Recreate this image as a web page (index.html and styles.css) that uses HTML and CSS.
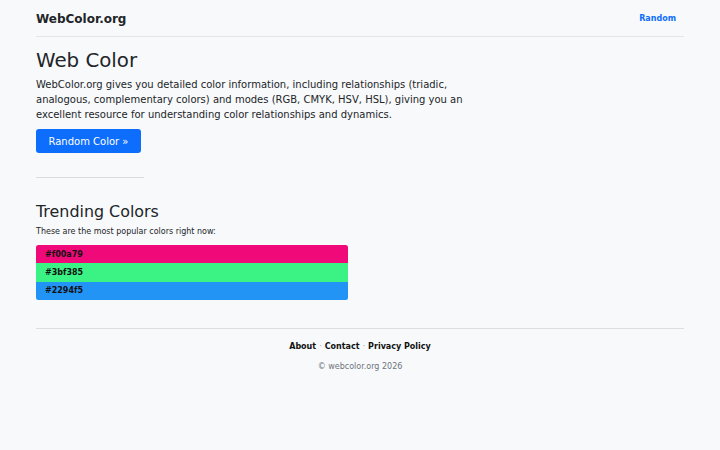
FILE: index.html
```html
<!DOCTYPE html>
<html lang="en">
<head>
<meta charset="utf-8">
<title>WebColor.org</title>
<link rel="stylesheet" href="styles.css">
</head>
<body>
<div class="container">
  <header class="site-header">
    <a class="brand" href="#">WebColor.org</a>
    <nav class="nav">
      <a class="nav-link" href="#">Random</a>
    </nav>
  </header>

  <main>
    <section class="intro">
      <h1 class="title">Web Color</h1>
      <p class="lead">WebColor.org gives you detailed color information, including relationships (triadic, analogous, complementary colors) and modes (RGB, CMYK, HSV, HSL), giving you an excellent resource for understanding color relationships and dynamics.</p>
      <div class="actions">
        <a class="btn" href="#">Random Color »</a>
      </div>
    </section>

    <hr class="divider">

    <section class="trending">
      <h2 class="section-title">Trending Colors</h2>
      <p class="note">These are the most popular colors right now:</p>
      <ul class="swatches">
        <li class="swatch" style="background-color: #f00a79;">#f00a79</li>
        <li class="swatch" style="background-color: #3bf385;">#3bf385</li>
        <li class="swatch" style="background-color: #2294f5;">#2294f5</li>
      </ul>
    </section>
  </main>

  <footer class="site-footer">
    <p class="footer-links">
      <a href="#">About</a><span class="sep">·</span><a href="#">Contact</a><span class="sep">·</span><a href="#">Privacy Policy</a>
    </p>
    <p class="copyright">© webcolor.org 2026</p>
  </footer>
</div>
</body>
</html>
```
FILE: styles.css
```css
* {
  box-sizing: border-box;
}

html,
body {
  margin: 0;
  padding: 0;
  background: #f8f9fa;
}

body {
  font-family: "DejaVu Sans", "Liberation Sans", sans-serif;
  color: #212529;
  font-size: 8px;
  line-height: 1.5;
}

a {
  text-decoration: none;
}

.container {
  width: 648px;
  margin: 0 auto;
}

/* top bar */
.site-header {
  display: flex;
  align-items: center;
  justify-content: space-between;
  padding: 9px 0 7px;
  border-bottom: 1px solid #e3e5e8;
  margin-bottom: 12px;
}

.brand {
  color: #212529;
  font-weight: 700;
  font-size: 12px;
  line-height: 20px;
}

.nav-link {
  display: block;
  padding: 4px 8px;
  line-height: 12px;
  font-size: 8px;
  font-weight: 700;
  color: #0d6efd;
}

/* intro */
.title {
  margin: 0 0 4px;
  font-size: 19.8px;
  line-height: 24px;
  font-weight: 400;
}

.lead {
  margin: 0 0 7px;
  max-width: 432px;
  font-size: 10px;
  line-height: 15px;
}

.actions {
  display: flex;
}

.btn {
  display: block;
  padding: 4.5px 12.5px;
  font-size: 10px;
  line-height: 15px;
  color: #fff;
  background: #0d6efd;
  border-radius: 3px;
}

.divider {
  width: 108px;
  margin: 24px 0 0;
  border: 0;
  border-top: 1px solid #dadcdf;
}

/* trending list */
.section-title {
  margin: 25px 0 4px;
  font-size: 15.9px;
  line-height: 18.6px;
  font-weight: 400;
}

.note {
  margin: 0 0 7.4px;
  font-size: 8px;
  line-height: 12px;
}

.swatches {
  list-style: none;
  margin: 0;
  padding: 0;
  width: 312px;
  border-radius: 2.5px;
  overflow: hidden;
}

.swatch {
  padding: 3.8px 9px 2.54px;
  font-size: 8px;
  line-height: 12px;
  font-weight: 700;
  color: #111;
}

/* footer */
.site-footer {
  margin-top: 28px;
  border-top: 1px solid #dcdee1;
  padding-top: 12.4px;
  text-align: center;
}

.footer-links {
  margin: 0 0 7.6px;
  font-size: 8px;
  line-height: 12px;
  font-weight: 700;
}

.footer-links a {
  color: #111;
}

.sep {
  color: #a0a4a8;
  font-weight: 400;
  margin: 0 3px;
}

.copyright {
  margin: 0;
  font-size: 8px;
  line-height: 12px;
  color: #6c757d;
}
```
